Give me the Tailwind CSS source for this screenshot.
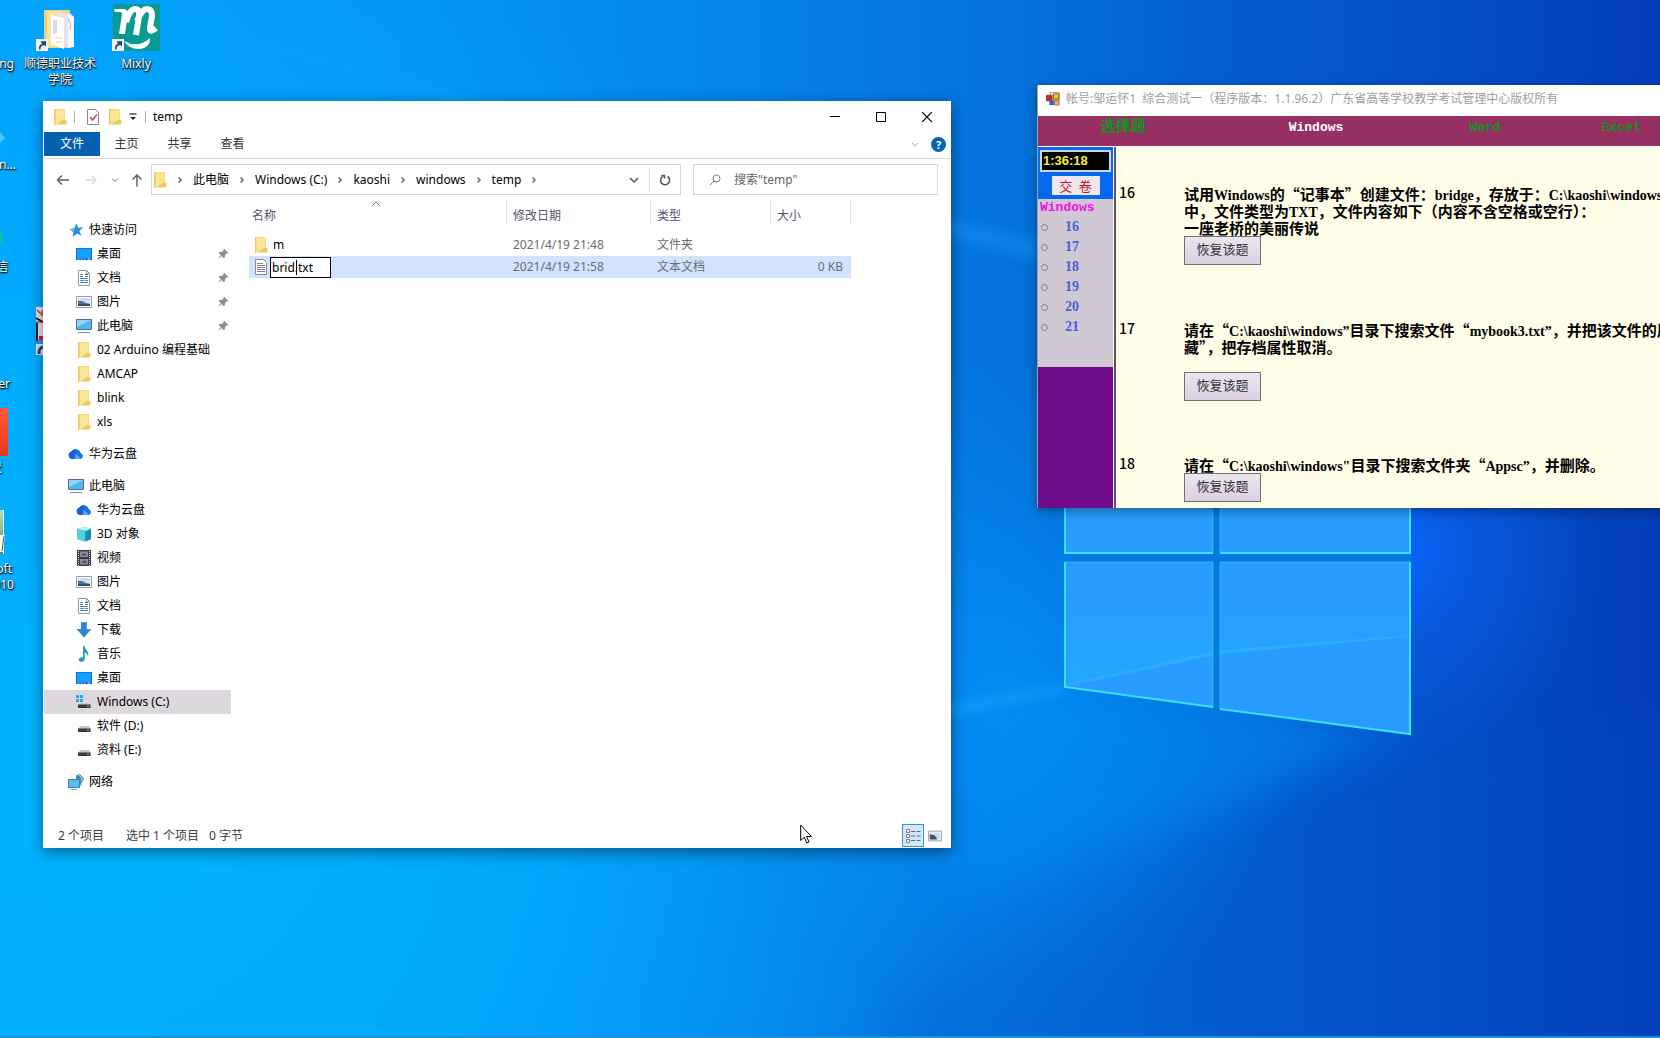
<!DOCTYPE html>
<html lang="zh-CN">
<head>
<meta charset="utf-8">
<title>temp</title>
<script src="https://cdn.jsdelivr.net/npm/@tailwindcss/browser@4"></script>
</head>
<body class="relative h-screen w-full overflow-hidden bg-[#0078e0] font-['Noto_Sans','Noto_Sans_CJK_SC',sans-serif] text-xs text-black">

<!-- Wallpaper -->
<svg class="absolute inset-0 h-full w-full" viewBox="0 0 1660 1038" preserveAspectRatio="none" aria-hidden="true">
  <defs>
    <linearGradient id="sky" x1="0" y1="0" x2="1660" y2="0" gradientUnits="userSpaceOnUse">
      <stop offset="0" stop-color="#02a2fb"/><stop offset=".25" stop-color="#0496f2"/><stop offset=".45" stop-color="#0583e8"/><stop offset=".6" stop-color="#0472dc"/><stop offset=".72" stop-color="#0460d0"/><stop offset=".86" stop-color="#044fc6"/><stop offset="1" stop-color="#043eb8"/>
    </linearGradient>
    <radialGradient id="cyan" cx="120" cy="760" r="860" gradientUnits="userSpaceOnUse">
      <stop offset="0" stop-color="#02b4ff"/><stop offset=".5" stop-color="#02b0ff" stop-opacity=".7"/><stop offset="1" stop-color="#02a8ff" stop-opacity="0"/>
    </radialGradient>
    <radialGradient id="glow" cx="1390" cy="550" r="210" gradientUnits="userSpaceOnUse">
      <stop offset="0" stop-color="#0a66ff"/><stop offset=".4" stop-color="#0a60ee" stop-opacity=".6"/><stop offset="1" stop-color="#0a5ce0" stop-opacity="0"/>
    </radialGradient>
    <radialGradient id="left" cx="1010" cy="690" r="330" gradientUnits="userSpaceOnUse">
      <stop offset="0" stop-color="#039bff" stop-opacity=".65"/><stop offset="1" stop-color="#0396f8" stop-opacity="0"/>
    </radialGradient>
    <linearGradient id="beam" x1="0" y1="0" x2="0" y2="1">
      <stop offset="0" stop-color="#20b4ff" stop-opacity="0"/><stop offset="1" stop-color="#20b4ff" stop-opacity=".9"/>
    </linearGradient>
    <filter id="soft" x="-50%" y="-50%" width="200%" height="200%"><feGaussianBlur stdDeviation="20"/></filter>
    <filter id="faint" x="-10%" y="-30%" width="120%" height="160%"><feGaussianBlur stdDeviation="5"/></filter>
  </defs>
  <rect width="1660" height="1038" fill="url(#sky)"/>
  <rect width="1660" height="1038" fill="url(#cyan)"/>
  <rect width="1660" height="1038" fill="url(#left)"/>
  <path d="M1410 735L1260 700L951 690V900Z" fill="#048cf0" opacity=".5" filter="url(#soft)"/>
  <path d="M1420 745L900 1000L860 1080H1700V700Z" fill="#0450c4" opacity=".16" filter="url(#soft)"/>
  <rect width="1660" height="1038" fill="url(#glow)"/>
  <path d="M150 12L700 160L1040 240V262L690 170Z" fill="#20acff" opacity=".25" filter="url(#faint)"/>
  <path d="M951 704L1065 684V692L951 716Z" fill="#20b0ff" opacity=".4" filter="url(#faint)"/>
  <path d="M1065 480H1411V735L1065 687Z" fill="#047ae0"/>
  <g fill="#289cff" stroke="#35cdf8" stroke-opacity=".7">
    <path d="M1065 490H1213V553H1065Z"/>
    <path d="M1220 490H1410V553H1220Z"/>
    <path d="M1065 562H1213V707L1065 687Z"/>
    <path d="M1220 562H1410V734L1220 709Z"/>
  </g>
  <path d="M1067 590H1212V655L1067 685ZM1221 590H1409V637L1221 654Z" fill="url(#beam)" opacity=".5"/>
  <path d="M1067 684L1212 652V656L1070 686ZM1221 650L1409 635V637L1221 654Z" fill="#35c0ff" opacity=".4"/>
  <path d="M1214 560V712H1219V560Z" fill="#047ae0"/>
  <path d="M1065 480V553H1213M1065 562V687L1213 707M1220 709L1410 734V562M1410 480V553H1220" fill="none" stroke="#3ce0ff" stroke-width="2"/>
  <rect y="1036" width="1660" height="2" fill="#1a90dc"/>
</svg>

<!-- Shared symbols -->
<svg class="hidden" aria-hidden="true">
  <symbol id="i-folder" viewBox="0 0 16 16"><path d="M2 0h11v11h1v4H3.500L2 16z" fill="#f6da7e"/><path d="M3 1h9v10l2 0v4H3z" fill="#fbe596"/><path d="M2 0h1.500v16H2zM11 11h3.500v4.500H4z" fill="#edc963"/></symbol>
  <symbol id="i-star" viewBox="0 0 16 16"><path d="M8.500 1.500l1.700 4.300 5.100-.6-3.900 3.700 2 4.800-4.300-2.100-4.200 3.400.3-5L1.500 7.200l4.600-.9z" fill="#2f8fd4"/><path d="M8.500 1.500L6.100 6.300l-4.600.9 3.700 2.800z" fill="#63bdf0"/></symbol>
  <symbol id="i-desktop" viewBox="0 0 16 16"><path d="M0 2h16v12H0z" fill="#0878d8"/><path d="M1 3h14v9H1z" fill="#14a0fc"/><path d="M2 13h1M5 13h1M8 13h1M12 13h2" stroke="#bfe6ff"/></symbol>
  <symbol id="i-doc" viewBox="0 0 16 16"><path d="M2.500.5h8l3 3v12h-11z" fill="#fff" stroke="#8b98a2"/><path d="M4 4.500h3M9 4.500h3M4 6.500h3M9 6.500h3M4 8.500h8M4 10.500h4M9 10.500h3M4 12.500h8" stroke="#3e86ac"/><path d="M10.500.5v3h3" fill="none" stroke="#8b98a2"/></symbol>
  <symbol id="i-text" viewBox="0 0 16 16"><path d="M2.500.5h8l3 3v12h-11z" fill="#fff" stroke="#8b8b9b"/><path d="M4 4.500h6M4 6.500h8M4 8.500h8M4 10.500h8M4 12.500h8" stroke="#8a7f92"/></symbol>
  <symbol id="i-pic" viewBox="0 0 16 16"><path d="M.5 2.500h15v11H.5z" fill="#fff" stroke="#9a99a3"/><path d="M2 4h12v8H2z" fill="#c8dcf2"/><path d="M2 7l4 0 4 2 4 1v2H2z" fill="#4d7290"/><path d="M2 10h12v2H2z" fill="#305068"/></symbol>
  <symbol id="i-pc" viewBox="0 0 16 16"><path d="M.5 1.500h15v10H.5z" fill="#53b6ee" stroke="#4a6f96"/><path d="M1 2h14L1 9z" fill="#8ed4f9"/><path d="M2 14.500h12" stroke="#6b97c5"/></symbol>
  <symbol id="i-cloud" viewBox="0 0 16 16"><path d="M4 13a3.800 3.800 0 0 1-.6-7.400A5 5 0 0 1 12.500 7 3.200 3.200 0 0 1 13 13z" fill="#1677ec"/><path d="M3.500 5.600A5 5 0 0 1 8 3c-.5 3 .5 5 2 6.500L5 13H4a3.800 3.800 0 0 1-.5-7.400z" fill="#1c62d0"/><path d="M7.500 7.500L13 13H7z" fill="#5aa8ff"/></symbol>
  <symbol id="i-cube" viewBox="0 0 16 16"><path d="M1 3l8-2 6 2v10l-6 2.500L1 13z" fill="#22b2cf"/><path d="M1 3l8-2 6 2-5 2z" fill="#bdf0f8"/><path d="M1 3l8 2.500V15.500L1 13z" fill="#54cfe0"/><path d="M9.500 5.500L15 3v10l-5.500 2.500z" fill="#148fae"/></symbol>
  <symbol id="i-video" viewBox="0 0 16 16"><path d="M1 0h14v16H1z" fill="#3c3b47"/><path d="M4 1.500h8v5.500H4zM4 9h8v5.500H4z" fill="#8e8b98"/><path d="M2.500 1v15M13.500 1v15" stroke="#ddd" stroke-dasharray="1 1"/><path d="M5 5l3-2 3 3zM5 13l4-3 2 3z" fill="#4a4a70"/></symbol>
  <symbol id="i-down" viewBox="0 0 16 16"><path d="M5 0h6v7h4.500L8 15.500.5 7H5z" fill="#2f86d8"/><path d="M5.500.5h5v7h3" fill="none" stroke="#5a9fdf"/></symbol>
  <symbol id="i-note" viewBox="0 0 16 16"><path d="M7 0h1.500C9 4 13.500 5 12 11 11.500 8 10.500 7 8.800 6.500V13c0 3.500-6 3.800-6 .8 0-2.200 2.700-3 4.200-2.300z" fill="#1c9dc4"/></symbol>
  <symbol id="i-drive" viewBox="0 0 16 16"><path d="M4 8h9l1.500 3h-12z" fill="#c4c2c6"/><path d="M2 10.500h12.500V14H2z" fill="#39393d"/><path d="M11 12h2" stroke="#b9b9b9"/></symbol>
  <symbol id="i-windrive" viewBox="0 0 16 16"><path d="M0 1h3v3H0zM4 1h3v3H4zM0 5h3v3H0zM4 5h3v3H4z" fill="#1caedc"/><path d="M5 9h8l1.500 2H3z" fill="#c4c2c6"/><path d="M2 10.500h12.500V14H2z" fill="#39393d"/><path d="M11 12h2" stroke="#b9b9b9"/></symbol>
  <symbol id="i-net" viewBox="0 0 16 16"><path d="M8 1.500L12 0l4 5-3 7-5 1z" fill="#4b88b4"/><path d="M11 1c4 3 4 7 1 11" fill="none" stroke="#bfe3f5"/><path d="M.5 5.500h11v8H.5z" fill="#5bbcf2" stroke="#3a7fb2"/><path d="M3 15.500h6" stroke="#7fb0d8"/></symbol>
  <symbol id="i-pin" viewBox="0 0 12 12"><path d="M7 .5L11.500 5l-1.200.4-.5-.2-2 2 .1 2.300-1 .8L4.500 8 .8 11.200 3.800 7 1.500 5l.9-1 2.400.1 2-2L6.600 1.500z" fill="#8e8c94"/></symbol>
  <symbol id="i-chev" viewBox="0 0 8 8"><path d="M2.500 1.500L5 4 2.500 6.500" fill="none" stroke="#6b6b6b" stroke-width="1.500"/></symbol>
  <symbol id="i-link" viewBox="0 0 12 12"><path d="M0 0h12v12H0z" fill="#f4f4f8"/><path d="M3 10.500C2.500 7 4 5.500 6 5L4.500 2.500 10 2v5.500L8.300 6C6 6.500 4.500 7.500 4.500 10.500z" fill="#25466e"/></symbol>
</svg>

<!-- Desktop shortcuts -->
<div class="text-center leading-4 text-white [text-shadow:1px_1px_2px_#000,0_1px_1px_#000]">
  <div class="absolute -left-[66px] top-14 w-20 text-right">Doing</div>
  <div class="absolute -left-16 top-[157px] w-20 text-right">Arduin...</div>
  <div class="absolute -left-[72px] top-[259px] w-20 text-right">微信</div>
  <div class="absolute -left-[70px] top-[376px] w-20 text-right">Viewer</div>
  <div class="absolute left-0 top-[408px] h-12 w-2 bg-linear-to-b from-[#ff5a3c] to-[#f4301e]"></div>
  <div class="absolute -left-[78px] top-[460px] w-20 text-right">直尺</div>
  <div class="absolute left-0 top-[510px] h-11 w-1 border-r border-white bg-linear-to-b from-[#b8e0c0] to-[#3a9c58]"></div>
  <div class="absolute -left-[66px] top-[561px] w-20 text-right"><div class="pr-0.5">Microsoft</div><div>2010</div></div>
  <svg class="absolute left-0 top-[130px] h-4 w-2" viewBox="0 0 8 16" aria-hidden="true"><path d="M0 2l5 6-5 5z" fill="#52c4ff"/></svg>
  <svg class="absolute left-0 top-[230px] h-4 w-1" viewBox="0 0 4 16" aria-hidden="true"><path d="M0 1q5 6 0 13z" fill="#10c890"/></svg>
  <svg class="absolute left-0 top-[534px] h-5 w-2" viewBox="0 0 8 20" aria-hidden="true"><path d="M0 1h5L3 18H0z" fill="#fff"/><path d="M4 2L2 17" stroke="#207038"/></svg>
  <svg class="absolute left-9 top-[307px] h-12 w-4" viewBox="0 0 16 48" aria-hidden="true"><path d="M0 0h16v48H0z" fill="#e8e4ee"/><path d="M1 3l5 5V3M0 15h8v19H0" fill="none" stroke="#b4485c" stroke-width="1.500"/><path d="M0 11l7 4M1 16v18" stroke="#222" stroke-width="2"/><path d="M3 29h6v4H3z" fill="#d0203c"/><path d="M0 34h8v3H0z" fill="#0aa4f8"/><path d="M3 47c0-5 1-6 4-7" fill="none" stroke="#25466e" stroke-width="3"/></svg>

  <a href="#" class="absolute left-5 top-2 flex w-20 flex-col items-center gap-1">
    <svg class="h-11 w-12" viewBox="0 0 48 44" aria-hidden="true"><path d="M8 2h26v38H8z" fill="#f0d27c"/><path d="M11 3h16v36H11z" fill="#f7e2a4"/><path d="M22 5h12l4 4v30H26z" fill="#e4e4f0"/><path d="M32 6l6 3v30l-6 1z" fill="#fafaff"/><path d="M15 7l13 3v31l-13-5z" fill="#fff"/><path d="M18 12v14M20 12v13M32 10q4 6 2 12" fill="none" stroke="#b4b4c8"/><path d="M20 30h6M20 34h5" stroke="#ecc6c0"/><use href="#i-link" y="31" width="12" height="12"/></svg>
    <span>顺德职业技术<br>学院</span>
  </a>
  <a href="#" class="absolute left-24 top-1 flex w-20 flex-col items-center gap-1">
    <svg class="size-12" viewBox="0 0 48 48" aria-hidden="true"><path d="M1 0h47v47H1z" fill="#0a9a94"/><path d="M2 5h9q5 0 5 5l-3 20h-6l3-20q0-2-2-2H3z" fill="#fff"/><path d="M14 18q4-13 9-13t4 7l-3 19M25 17q5-12 10-12t5 7l-2 11q-1 7 6 1" fill="none" stroke="#fff" stroke-width="6"/><path d="M12 37q14 8 26-3 1 9-10 11-10 1-16-8z" fill="#fff"/><use href="#i-link" y="35" width="12" height="12"/></svg>
    <span>Mixly</span>
  </a>
</div>

<!-- File explorer -->
<section class="absolute left-[43px] top-[101px] flex h-[747px] w-[908px] flex-col bg-white px-px shadow-[0_4px_14px_#00000070]" aria-label="temp">
  <header class="flex h-[31px] shrink-0 items-center pl-2">
    <svg class="size-4"><use href="#i-folder"/></svg>
    <span class="ml-1.5 h-3 w-px bg-[#b0a8b4]"></span>
    <svg class="ml-[10px] size-4" viewBox="0 0 16 16" aria-hidden="true"><path d="M2.500.5h8l3 3v12h-11z" fill="#fff" stroke="#8b7f93"/><path d="M5 8l2.500 3L12 5.500" fill="none" stroke="#c0485c" stroke-width="1.500"/></svg>
    <svg class="ml-[6px] size-4"><use href="#i-folder"/></svg>
    <svg class="ml-1 size-3" viewBox="0 0 12 12" aria-hidden="true"><path d="M2.500 3h7" stroke="#222" stroke-width="1.200"/><path d="M3 6h6L6 9z" fill="#222"/></svg>
    <span class="ml-1.5 h-3 w-px bg-[#b0a8b4]"></span>
    <h1 class="ml-[7px] flex-1">temp</h1>
    <button class="grid h-full w-[46px] place-items-center" aria-label="最小化"><svg class="h-2.5 w-2.5" viewBox="0 0 10 10"><path d="M0 4.500h10" stroke="#000"/></svg></button>
    <button class="grid h-full w-[46px] place-items-center" aria-label="最大化"><svg class="h-2.5 w-2.5" viewBox="0 0 10 10"><path d="M.5.500h9v9h-9z" fill="none" stroke="#000"/></svg></button>
    <button class="grid h-full w-[46px] place-items-center" aria-label="关闭"><svg class="h-2.5 w-2.5" viewBox="0 0 10 10"><path d="M0 0l10 10M10 0L0 10" stroke="#000" stroke-width="1.200"/></svg></button>
  </header>

  <nav class="flex h-[27px] shrink-0 items-start border-b border-[#dcd6de] text-[#333]">
    <button class="h-6 w-14 bg-[#0560b0] text-white">文件</button>
    <button class="h-6 w-[53px]">主页</button>
    <button class="h-6 w-[53px]">共享</button>
    <button class="h-6 w-[53px]">查看</button>
    <span class="ml-auto flex h-6 items-center gap-3 pr-1">
      <svg class="size-2" viewBox="0 0 8 8" aria-hidden="true"><path d="M1 3l3 3 3-3" fill="none" stroke="#a8a8a8"/></svg>
      <button class="grid size-[15px] place-items-center rounded-full bg-[#0a64b4] text-[11px] font-bold leading-none text-white" aria-label="帮助">?</button>
    </span>
  </nav>

  <div class="flex h-[41px] shrink-0 items-center pr-3 pl-[11px]">
    <button aria-label="后退"><svg class="size-4" viewBox="0 0 16 16"><path d="M14 8H2.500M7 3.500L2.500 8 7 12.500" fill="none" stroke="#606060" stroke-width="1.500"/></svg></button>
    <button class="ml-3" aria-label="前进"><svg class="size-4" viewBox="0 0 16 16"><path d="M2 8h11M9 4l4 4-4 4" fill="none" stroke="#dcdcdc" stroke-width="1.500"/></svg></button>
    <button class="ml-3" aria-label="历史"><svg class="size-2" viewBox="0 0 8 8"><path d="M1 2.500l3 3 3-3" fill="none" stroke="#777"/></svg></button>
    <button class="ml-2.5" aria-label="上移"><svg class="size-4" viewBox="0 0 16 16"><path d="M8 14.500V3M3.500 7.500L8 3l4.500 4.500" fill="none" stroke="#606060" stroke-width="1.500"/></svg></button>
    <div class="ml-1.5 flex h-[31px] flex-1 items-center border border-[#ddd3df]">
      <svg class="size-4"><use href="#i-folder"/></svg>
      <ol class="ml-2 flex items-center gap-[9px] whitespace-nowrap">
        <li><svg class="size-2"><use href="#i-chev"/></svg></li>
        <li><a href="#">此电脑</a></li><li><svg class="size-2"><use href="#i-chev"/></svg></li>
        <li><a href="#">Windows (C:)</a></li><li><svg class="size-2"><use href="#i-chev"/></svg></li>
        <li><a href="#">kaoshi</a></li><li><svg class="size-2"><use href="#i-chev"/></svg></li>
        <li><a href="#">windows</a></li><li><svg class="size-2"><use href="#i-chev"/></svg></li>
        <li><a href="#">temp</a></li><li><svg class="size-2"><use href="#i-chev"/></svg></li>
      </ol>
      <button class="ml-auto px-2.5" aria-label="展开"><svg class="size-2.5" viewBox="0 0 10 10"><path d="M1 3l4 4 4-4" fill="none" stroke="#555" stroke-width="1.500"/></svg></button>
      <button class="grid h-6 w-[31px] place-items-center border-l border-[#ddd3df]" aria-label="刷新"><svg class="size-3" viewBox="0 0 12 12"><path d="M8.500 2.500A4.500 4.500 0 1 1 4 2.300M2.500 1.500h3v3" fill="none" stroke="#555" stroke-width="1.500"/></svg></button>
    </div>
    <label class="ml-3 flex h-[31px] w-[245px] items-center border border-[#ddd3df] pl-[15px]">
      <svg class="size-3" viewBox="0 0 12 12" aria-hidden="true"><circle cx="7.500" cy="4.500" r="3.500" fill="none" stroke="#777"/><path d="M5 7L1 11" stroke="#777"/></svg>
      <input class="ml-[13px] w-40 placeholder:text-[#666]" placeholder='搜索"temp"' aria-label="搜索">
    </label>
  </div>

  <div class="flex min-h-0 flex-1">
    <nav class="w-[187px] shrink-0 pt-[18px]">
      <ul class="[&_a]:flex [&_a]:h-6 [&_a]:items-center [&_a]:gap-[5px] [&_a]:pl-8 [&_svg]:size-4 [&_svg]:shrink-0">
        <li><a href="#" class="pl-6!"><svg><use href="#i-star"/></svg>快速访问</a></li>
        <li><a href="#"><svg><use href="#i-desktop"/></svg>桌面<svg class="mr-0.5 ml-auto size-3!"><use href="#i-pin"/></svg></a></li>
        <li><a href="#"><svg><use href="#i-doc"/></svg>文档<svg class="mr-0.5 ml-auto size-3!"><use href="#i-pin"/></svg></a></li>
        <li><a href="#"><svg><use href="#i-pic"/></svg>图片<svg class="mr-0.5 ml-auto size-3!"><use href="#i-pin"/></svg></a></li>
        <li><a href="#"><svg><use href="#i-pc"/></svg>此电脑<svg class="mr-0.5 ml-auto size-3!"><use href="#i-pin"/></svg></a></li>
        <li><a href="#"><svg><use href="#i-folder"/></svg>02 Arduino 编程基础</a></li>
        <li><a href="#"><svg><use href="#i-folder"/></svg>AMCAP</a></li>
        <li><a href="#"><svg><use href="#i-folder"/></svg>blink</a></li>
        <li><a href="#"><svg><use href="#i-folder"/></svg>xls</a></li>
        <li class="mt-2"><a href="#" class="pl-6!"><svg><use href="#i-cloud"/></svg>华为云盘</a></li>
        <li class="mt-2"><a href="#" class="pl-6!"><svg><use href="#i-pc"/></svg>此电脑</a></li>
        <li><a href="#"><svg><use href="#i-cloud"/></svg>华为云盘</a></li>
        <li><a href="#"><svg><use href="#i-cube"/></svg>3D 对象</a></li>
        <li><a href="#"><svg><use href="#i-video"/></svg>视频</a></li>
        <li><a href="#"><svg><use href="#i-pic"/></svg>图片</a></li>
        <li><a href="#"><svg><use href="#i-doc"/></svg>文档</a></li>
        <li><a href="#"><svg><use href="#i-down"/></svg>下载</a></li>
        <li><a href="#"><svg><use href="#i-note"/></svg>音乐</a></li>
        <li><a href="#"><svg><use href="#i-desktop"/></svg>桌面</a></li>
        <li><a href="#" class="bg-[#ddd7de]"><svg><use href="#i-windrive"/></svg>Windows (C:)</a></li>
        <li><a href="#"><svg><use href="#i-drive"/></svg>软件 (D:)</a></li>
        <li><a href="#"><svg><use href="#i-drive"/></svg>资料 (E:)</a></li>
        <li class="mt-2"><a href="#" class="pl-6!"><svg><use href="#i-net"/></svg>网络</a></li>
      </ul>
    </nav>

    <div class="relative flex-1 pl-[18px]">
      <svg class="absolute left-[140px] top-0 h-2 w-2.5" viewBox="0 0 10 8" aria-hidden="true"><path d="M1 6l4-4 4 4" fill="none" stroke="#777"/></svg>
      <table class="w-[602px] table-fixed border-separate border-spacing-0 text-left text-[#6b6b75]">
        <colgroup><col class="w-[258px]"><col class="w-36"><col class="w-[120px]"><col class="w-20"></colgroup>
        <thead>
          <tr class="h-[34px] align-top text-[#56566a] [&_div]:h-6 [&_div]:border-r [&_div]:border-[#e8dfea] [&_div]:leading-8 [&_th]:p-0 [&_th]:font-normal">
            <th><div class="pl-[3px]">名称</div></th><th><div class="pl-1.5">修改日期</div></th><th><div class="pl-1.5">类型</div></th><th><div class="pl-1.5">大小</div></th>
          </tr>
        </thead>
        <tbody class="[&_td]:h-[22px] [&_td]:p-0 [&_td]:leading-5">
          <tr>
            <td><div class="flex items-center gap-1 pl-1 text-black"><svg class="size-4"><use href="#i-folder"/></svg>m</div></td>
            <td class="pl-1.5!">2021/4/19 21:48</td><td class="pl-1.5!">文件夹</td><td></td>
          </tr>
          <tr class="bg-[#d2e3ff]">
            <td><div class="flex items-center gap-px pl-1"><svg class="size-4"><use href="#i-text"/></svg>
              <span class="relative"><input class="block h-[21px] w-[61px] border border-black bg-white px-px text-black" value="brid.txt" aria-label="文件名"><span class="absolute left-[26px] top-[3px] h-[15px] w-px bg-black"></span></span></div></td>
            <td class="pl-1.5!">2021/4/19 21:58</td><td class="pl-1.5!">文本文档</td><td class="pr-2! text-right">0 KB</td>
          </tr>
        </tbody>
      </table>
    </div>
  </div>

  <footer class="flex h-[25px] shrink-0 items-center pl-3.5 text-[#3c3c48]">
    <span>2 个项目</span><span class="ml-[22px]">选中 1 个项目</span><span class="ml-[10px]">0 字节</span>
    <button class="ml-auto grid h-[23px] w-[22px] place-items-center border border-[#3a96c8] bg-[#cfe8f8]" aria-label="详细信息"><svg class="h-4 w-4" viewBox="0 0 16 16"><path d="M1.500 1.500h3v3h-3zM1.500 6.500h3v3h-3zM1.500 11.500h3v3h-3z" fill="#fff" stroke="#8d7288"/><path d="M6 3.500h4M11.500 3.500h4M6 8h4M11.500 8h4M6 12.500h4M11.500 12.500h4" stroke="#4d6888"/></svg></button>
    <button class="mr-2 ml-1" aria-label="大图标"><svg class="size-3.5" viewBox="0 0 16 16"><path d="M.5 2.500h15v11H.5z" fill="#fff" stroke="#9a8f9b"/><path d="M2 4h12v8H2z" fill="#c8dcf2"/><path d="M2 6l5 1 3 3v2H2z" fill="#35526c"/></svg></button>
  </footer>
</section>

<!-- Exam client, running past the right edge of the screen -->
<section class="absolute left-[1037px] top-[85px] -right-10 flex h-[423px] flex-col overflow-hidden whitespace-nowrap border-l border-[#8aa] bg-white shadow-[0_3px_10px_#00000060]" aria-label="综合测试一">
  <header class="flex h-[31px] shrink-0 items-center gap-1.5 pl-2 pb-1 text-[#a09ca4]">
    <svg class="size-[14px]" viewBox="0 0 15 15" aria-hidden="true"><path d="M4.500.5h10v8h-10z" fill="#f8f0c8" stroke="#b0a070"/><path d="M8 2h5.500v5.500H8z" fill="#f4c41c" stroke="#665"/><path d="M.5 3.500h6v6h-6z" fill="#c8281c" stroke="#842"/><path d="M3.500 9h5v5h-5z" fill="#3560c8"/><path d="M9 9h5v5H9z" fill="#f0b820" stroke="#a68"/></svg>
    <h2 class="whitespace-pre">帐号:邹运怀1  综合测试一（程序版本：1.1.96.2）广东省高等学校教学考试管理中心版权所有</h2>
  </header>
  <nav class="flex h-[31px] shrink-0 items-start border-b border-white bg-[#963063] pt-[3px] text-center font-['Liberation_Mono','Noto_Sans_CJK_SC',monospace] text-[13px] leading-[18px] font-bold text-[#0c981c]">
    <a href="#" class="w-[170px] text-[15px]">选择题</a>
    <a href="#" class="w-[216px] text-white">Windows</a>
    <a href="#" class="w-[122px]">Word</a>
    <a href="#" class="w-[150px]">Excel</a>
  </nav>
  <div class="flex min-h-0 flex-1">
    <aside class="flex w-[76px] shrink-0 flex-col border-r border-white bg-[#700a8c]">
      <div class="flex h-[52px] flex-col items-center gap-1 bg-[#0668ea] pt-[3px]">
        <div class="h-[22px] w-[71px] border-2 border-[#c8d4e8] bg-black pl-px font-['Liberation_Sans',sans-serif] text-[13px] leading-[18px] font-bold text-[#f0f03c]">1:36:18</div>
        <button class="h-[19px] w-12 bg-[#ece8f0] text-[13px] leading-[18px] text-[#c81428]">交&ensp;卷</button>
      </div>
      <fieldset class="h-[168px] bg-[#d0c8d2] font-['Liberation_Serif',serif] text-[14px] leading-5 font-bold text-[#4c60e0]">
        <legend class="contents"><span class="block pl-0.5 font-['Liberation_Mono',monospace] text-[13px] leading-[18px] text-[#f010e8]">Windows</span></legend>
        <label class="flex items-center gap-[17px] pl-[3px]"><input type="radio" name="q" class="size-[7px] appearance-none rounded-full border border-[#7c78a8]">16</label>
        <label class="flex items-center gap-[17px] pl-[3px]"><input type="radio" name="q" class="size-[7px] appearance-none rounded-full border border-[#7c78a8]">17</label>
        <label class="flex items-center gap-[17px] pl-[3px]"><input type="radio" name="q" class="size-[7px] appearance-none rounded-full border border-[#7c78a8]">18</label>
        <label class="flex items-center gap-[17px] pl-[3px]"><input type="radio" name="q" class="size-[7px] appearance-none rounded-full border border-[#7c78a8]">19</label>
        <label class="flex items-center gap-[17px] pl-[3px]"><input type="radio" name="q" class="size-[7px] appearance-none rounded-full border border-[#7c78a8]">20</label>
        <label class="flex items-center gap-[17px] pl-[3px]"><input type="radio" name="q" class="size-[7px] appearance-none rounded-full border border-[#7c78a8]">21</label>
      </fieldset>
    </aside>
    <main class="flex-1 border-l-2 border-[#5c565c] bg-[#fffde8] pt-[38px] font-['Noto_Sans_CJK_SC',sans-serif] text-[15px] leading-[17px] font-bold [&_b]:font-['Liberation_Serif',serif] [&_b]:text-[14px] [&_b]:leading-[0px]">
      <article class="flex h-[136px]">
        <div class="w-[68px] pl-[3px] text-[14px] leading-[15px] font-medium">16</div>
        <div>
          <p>试用<b>Windows</b>的“记事本”创建文件：<b>bridge</b>，存放于：<b>C:\kaoshi\windows</b></p>
          <p>中，文件类型为<b>TXT</b>，文件内容如下（内容不含空格或空行）：</p>
          <p>一座老桥的美丽传说</p>
          <button class="block h-[29px] w-[77px] border border-[#707078] bg-linear-to-b from-[#ece6f0] to-[#dcd0e0] pb-1 text-[13px] font-normal text-[#333]">恢复该题</button>
        </div>
      </article>
      <article class="flex h-[135px]">
        <div class="w-[68px] pl-[3px] text-[14px] leading-[15px] font-medium">17</div>
        <div>
          <p>请在“<b>C:\kaoshi\windows”</b>目录下搜索文件“<b>mybook3.txt”</b>，并把该文件的属</p>
          <p>藏”，把存档属性取消。</p>
          <button class="mt-[17px] block h-[29px] w-[77px] border border-[#707078] bg-linear-to-b from-[#ece6f0] to-[#dcd0e0] pb-1 text-[13px] font-normal text-[#333]">恢复该题</button>
        </div>
      </article>
      <article class="flex">
        <div class="w-[68px] pl-[3px] text-[14px] leading-[15px] font-medium">18</div>
        <div>
          <p>请在“<b>C:\kaoshi\windows"</b>目录下搜索文件夹“<b>Appsc”</b>，并删除。</p>
          <button class="block h-[29px] w-[77px] border border-[#707078] bg-linear-to-b from-[#ece6f0] to-[#dcd0e0] pb-1 text-[13px] font-normal text-[#333]">恢复该题</button>
        </div>
      </article>
    </main>
  </div>
</section>

<!-- Mouse pointer -->
<svg class="absolute left-[800px] top-[824px] h-5 w-3" viewBox="0 0 12 20" aria-hidden="true"><path d="M.7 1v15.500l3.600-3.300 2.400 5.800 2.300-1-2.400-5.500h4.800z" fill="#fff" stroke="#000"/></svg>
</body>
</html>
